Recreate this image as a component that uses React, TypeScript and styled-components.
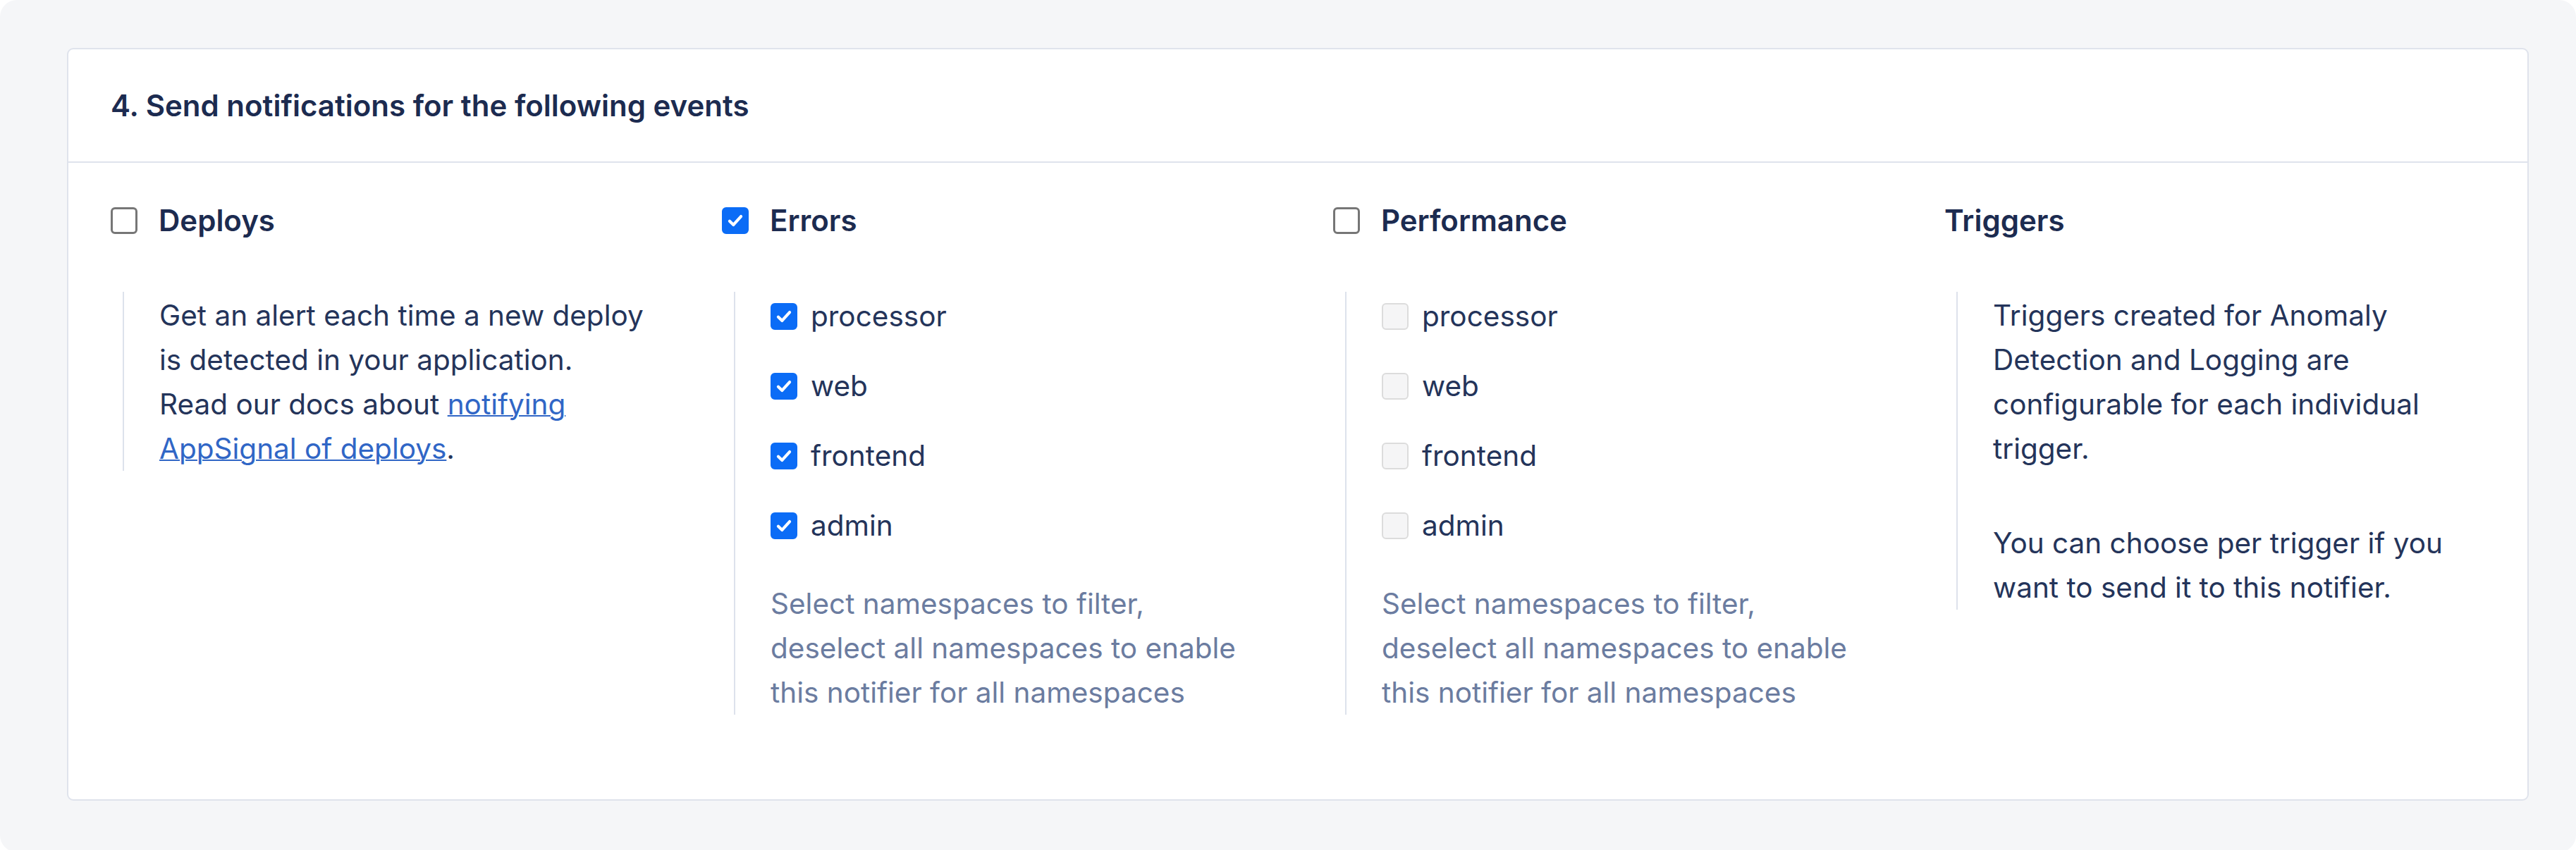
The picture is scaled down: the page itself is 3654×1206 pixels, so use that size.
import styled, { createGlobalStyle, css } from "styled-components";

const GlobalStyle = createGlobalStyle`
  html, body {
    margin: 0;
    padding: 0;
    background: #ffffff;
  }
  body {
    font-family: Inter, "Noto Sans", "Liberation Sans", sans-serif;
    -webkit-font-smoothing: antialiased;
  }
`;

const Page = styled.div`
  box-sizing: border-box;
  min-height: 100vh;
  padding: 68px 67px 73px 95px;
  background: #f5f6f8;
  border-radius: 24px;
  display: flex;
  align-items: flex-start;
`;

const Card = styled.section`
  flex: 1;
  background: #ffffff;
  border: 2px solid #dfe3ec;
  border-radius: 9px;
`;

const CardHeader = styled.header`
  height: 159px;
  display: flex;
  align-items: center;
  padding: 0 60px;
  border-bottom: 2px solid #dfe3ec;
`;

const CardTitle = styled.h2`
  margin: 0;
  font-size: 42px;
  font-weight: 600;
  color: #1c2b50;
`;

const EventGrid = styled.div`
  display: grid;
  grid-template-columns: repeat(4, 1fr);
  column-gap: 100px;
  padding: 50px 60px 120px;
`;

const EventColumn = styled.div`
  display: flex;
  flex-direction: column;
  min-width: 0;
`;

const EventHeading = styled.label`
  display: flex;
  align-items: center;
  gap: 30px;
  height: 63px;
  font-size: 42px;
  font-weight: 600;
  color: #1c2b50;
`;

type BoxState = "checked" | "unchecked" | "disabled";

const Box = styled.span<{ $state: BoxState }>`
  box-sizing: border-box;
  flex: none;
  width: 38px;
  height: 38px;
  border-radius: 6px;
  display: inline-flex;
  align-items: center;
  justify-content: center;
  ${({ $state }) =>
    $state === "checked"
      ? css`
          background: #0b6cf6;
          border: 2px solid #0b6cf6;
        `
      : $state === "disabled"
        ? css`
            background: #f5f5f6;
            border: 2px solid #dcdcdc;
          `
        : css`
            background: #ffffff;
            border: 3px solid #767676;
          `}
`;

const SubBlock = styled.div`
  margin: 70px 0 0 17px;
  padding: 2px 0 0 50px;
  border-left: 2px solid #dde2ec;
`;

const BodyText = styled.p`
  margin: 0;
  font-size: 40.5px;
  line-height: 63px;
  color: #24345a;

  & + & {
    margin-top: 71px;
  }
`;

const DocLink = styled.a`
  color: #3066c6;
  text-decoration: underline;
  text-decoration-thickness: 2px;
`;

const NamespaceList = styled.div`
  display: flex;
  flex-direction: column;
  gap: 36px;
  padding-top: 1px;
`;

const NamespaceRow = styled.label`
  display: flex;
  align-items: center;
  gap: 19px;
  height: 63px;
  font-size: 40.5px;
  color: #24345a;
`;

const Hint = styled.p`
  margin: 48px 0 0;
  font-size: 40.5px;
  line-height: 63px;
  color: #6b7ca0;
`;

function Checkbox({ state }: { state: BoxState }) {
  return (
    <Box $state={state}>
      {state === "checked" && (
        <svg width="28" height="28" viewBox="0 0 16 16" fill="none">
          <path
            d="M3.4 8.4 L6.5 11.4 L12.6 4.6"
            stroke="#ffffff"
            strokeWidth="2.4"
            strokeLinecap="round"
            strokeLinejoin="round"
          />
        </svg>
      )}
    </Box>
  );
}

const namespaces = ["processor", "web", "frontend", "admin"];

function NamespaceFilter({ state }: { state: BoxState }) {
  return (
    <SubBlock>
      <NamespaceList>
        {namespaces.map((name) => (
          <NamespaceRow key={name}>
            <Checkbox state={state} />
            {name}
          </NamespaceRow>
        ))}
      </NamespaceList>
      <Hint>
        Select namespaces to filter,
        <br />
        deselect all namespaces to enable this notifier for all namespaces
      </Hint>
    </SubBlock>
  );
}

export default function App() {
  return (
    <>
      <GlobalStyle />
      <Page>
        <Card>
          <CardHeader>
            <CardTitle>4. Send notifications for the following events</CardTitle>
          </CardHeader>
          <EventGrid>
            <EventColumn>
              <EventHeading>
                <Checkbox state="unchecked" />
                Deploys
              </EventHeading>
              <SubBlock>
                <BodyText>
                  Get an alert each time a new deploy is detected in your
                  application.
                  <br />
                  Read our docs about{" "}
                  <DocLink href="#">notifying AppSignal of deploys</DocLink>.
                </BodyText>
              </SubBlock>
            </EventColumn>

            <EventColumn>
              <EventHeading>
                <Checkbox state="checked" />
                Errors
              </EventHeading>
              <NamespaceFilter state="checked" />
            </EventColumn>

            <EventColumn>
              <EventHeading>
                <Checkbox state="unchecked" />
                Performance
              </EventHeading>
              <NamespaceFilter state="disabled" />
            </EventColumn>

            <EventColumn>
              <EventHeading>Triggers</EventHeading>
              <SubBlock>
                <BodyText>
                  Triggers created for Anomaly Detection and Logging are
                  configurable for each individual trigger.
                </BodyText>
                <BodyText>
                  You can choose per trigger if you want to send it to this
                  notifier.
                </BodyText>
              </SubBlock>
            </EventColumn>
          </EventGrid>
        </Card>
      </Page>
    </>
  );
}
